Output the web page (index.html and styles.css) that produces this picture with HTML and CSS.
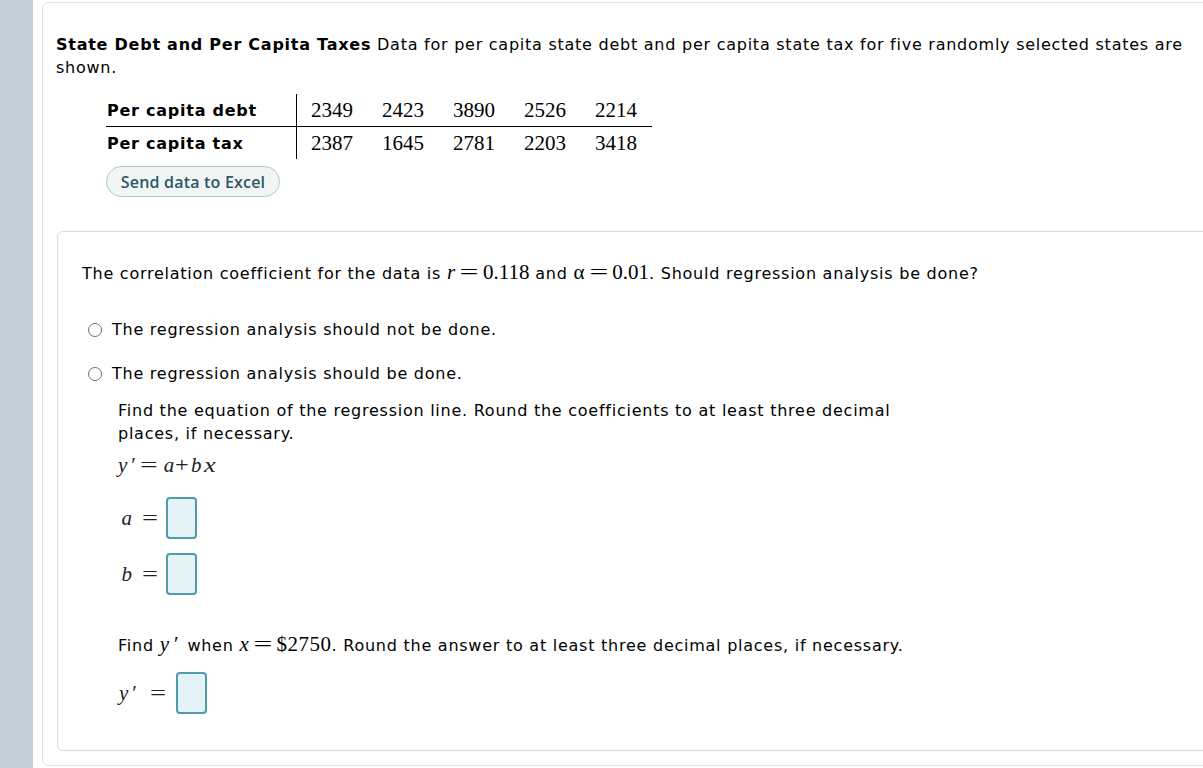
FILE: index.html
```html
<!DOCTYPE html>
<html lang="en">
<head>
<meta charset="utf-8">
<title>State Debt and Per Capita Taxes</title>
<link rel="stylesheet" href="styles.css">
</head>
<body>
<div class="app">
  <aside class="rail"></aside>
  <main class="main">
    <section class="card">
      <p class="intro"><b>State Debt and Per Capita Taxes</b> Data for per capita state debt and per capita state tax for five randomly selected states are shown.</p>
      <table class="data">
        <tr class="r1">
          <th>Per capita debt</th>
          <td>2349</td><td>2423</td><td>3890</td><td>2526</td><td>2214</td>
        </tr>
        <tr>
          <th>Per capita tax</th>
          <td>2387</td><td>1645</td><td>2781</td><td>2203</td><td>3418</td>
        </tr>
      </table>
      <button class="excel" type="button">Send data to Excel</button>

      <div class="qcard">
        <p class="q">The correlation coefficient for the data is <span class="m"><i>r</i><span class="op">=</span>0.118</span> and <span class="m">α<span class="op">=</span>0.01</span>. Should regression analysis be done?</p>
        <ul class="choices">
          <li><span class="radio"></span>The regression analysis should not be done.</li>
          <li><span class="radio"></span>The regression analysis should be done.</li>
        </ul>
        <div class="sub">
          <p class="txt">Find the equation of the regression line. Round the coefficients to at least three decimal places, if necessary.</p>
          <div class="eq m"><i>y</i><span class="prime">′</span><span class="op">=</span><i>a</i><span class="plus">+</span><i>b</i><i class="xv">x</i></div>
          <div class="ans ans-a"><span class="m var"><i>a</i></span><span class="m eqs">=</span><span class="box"></span></div>
          <div class="ans ans-b"><span class="m var"><i>b</i></span><span class="m eqs">=</span><span class="box"></span></div>
          <p class="txt find">Find <span class="m"><i>y</i><span class="prime pr-find">′</span></span> when <span class="m"><i>x</i><span class="op">=</span><span class="amt">$2750</span></span>. Round the answer to at least three decimal places, if necessary.</p>
          <div class="ans ans-y"><span class="m var"><i>y</i><span class="prime">′</span></span><span class="m eqs">=</span><span class="box"></span></div>
        </div>
      </div>
    </section>
  </main>
</div>
</body>
</html>
```

FILE: styles.css
```css
html, body {
  margin: 0;
  padding: 0;
  background: #ffffff;
  overflow: hidden;
}
body {
  font-family: "DejaVu Sans", Verdana, sans-serif;
  font-size: 16px;
  letter-spacing: 0.75px;
  color: #000;
  width: 1203px;
  height: 768px;
}
.app {
  display: flex;
  height: 768px;
}
.rail {
  flex: 0 0 33px;
  background: #c3cfd4;
}
.main {
  flex: 1 1 auto;
  padding: 2px 0 0 9px;
  min-width: 0;
}
.card {
  box-sizing: border-box;
  width: 1200px;
  height: 764px;
  border: 1px solid #dde4e4;
  border-radius: 6px;
  padding: 30px 14px 14px 13px;
}
.intro {
  margin: 0;
  width: 1140px;
  line-height: 23px;
}
.data {
  border-collapse: collapse;
  margin: 15px 0 0 50px;
}
.data th {
  text-align: left;
  font-weight: bold;
  width: 189px;
  height: 32px;
  padding: 0 0 0 1px;
  border-right: 1px solid #000;
  white-space: nowrap;
}
.data td {
  font-family: "Liberation Serif", "Times New Roman", serif;
  font-size: 21px;
  letter-spacing: 0;
  padding: 0 15px 0 14px;
  height: 32px;
}
.data .r1 th, .data .r1 td {
  border-bottom: 1px solid #000;
}
.excel {
  display: block;
  margin: 7px 0 0 50px;
  width: 174px;
  height: 31px;
  border: 1px solid #b5c6cc;
  border-radius: 16px;
  background: #f1f5f6;
  color: #2e5766;
  font-family: "Open Sans", sans-serif;
  font-weight: 600;
  font-size: 16px;
  letter-spacing: 0.2px;
  padding: 0;
}
.qcard {
  margin: 34px 0 0 1px;
  border: 1px solid #d6dddd;
  border-radius: 6px;
  padding: 30px 24px 0 24px;
  height: 520px;
  box-sizing: border-box;
}
.m {
  font-family: "Liberation Serif", "Times New Roman", serif;
  font-size: 21px;
  line-height: 1;
  letter-spacing: 0;
}
.op {
  display: inline-block;
  transform: scaleX(1.6);
  margin: 0 8px;
}
.q {
  margin: 0;
  line-height: 23px;
}
.choices {
  list-style: none;
  margin: 33px 0 0 0;
  padding: 0;
}
.choices li {
  display: flex;
  align-items: center;
  height: 23px;
  margin-bottom: 21px;
}
.radio {
  box-sizing: border-box;
  width: 14px;
  height: 14px;
  border: 1px solid #6f6f6f;
  border-radius: 50%;
  margin: 0 10px 0 6px;
}
.sub {
  padding-left: 36px;
  margin-top: -7px;
}
.txt {
  margin: 0;
  width: 790px;
  line-height: 23px;
}
.eq {
  margin-top: 10px;
  height: 26px;
  color: #222;
}
.eq .op {
  transform: scaleX(1.5);
  margin: 0 9px 0 7px;
}
.prime {
  font-style: normal;
  margin-left: 4px;
}
.pr-find {
  margin-left: 5px;
  margin-right: 3px;
}
.amt {
  letter-spacing: 0.5px;
}
.plus {
  display: inline-block;
  transform: scaleX(1.15);
  margin: 0 3px 0 2px;
}
.xv {
  margin-left: 2px;
  letter-spacing: 0;
  display: inline-block;
  transform: scaleX(1.25);
  transform-origin: left center;
}
.ans {
  display: flex;
  align-items: center;
  height: 42px;
}
.ans-a { margin-top: 16px; }
.ans-b { margin-top: 14px; }
.ans .var {
  width: 14px;
  text-align: right;
  color: #222;
}
.ans .eqs {
  display: inline-block;
  transform: scaleX(1.35);
  margin: 0 10px 0 12px;
  color: #222;
}
.ans-y .var {
  width: auto;
  padding-left: 1px;
}
.ans-y .eqs {
  margin: 0 12px 0 15px;
}
.box {
  box-sizing: border-box;
  width: 31px;
  height: 42px;
  border: 2px solid #4f9aab;
  border-radius: 4px;
  background: #e5f3f7;
}
.find {
  margin-top: 39px;
}
.ans-y { margin-top: 15px; }
```
